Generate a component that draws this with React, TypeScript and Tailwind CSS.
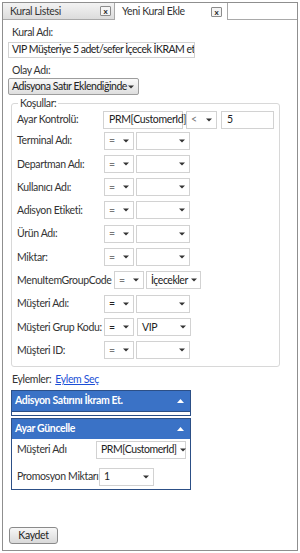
import React from "react";

function Arrow({ color = "#333" }: { color?: string }) {
    return (
        <svg width="6" height="4" viewBox="0 0 6 4" className="shrink-0">
            <path d="M0 0.5 L6 0.5 L3 3.5 Z" fill={color} />
        </svg>
    );
}

function UpArrow() {
    return (
        <svg width="7" height="4" viewBox="0 0 7 4">
            <path d="M0 4 L7 4 L3.5 0 Z" fill="#fff" />
        </svg>
    );
}

interface SelProps {
    w: string;
    value?: string;
    dim?: boolean;
}

function Sel({ w, value = "", dim = false }: SelProps) {
    return (
        <div className={`h-[18px] border border-[#d2d2d2] bg-white flex items-center justify-between gap-[3px] pl-[4px] pr-[4px] shrink-0 ${w}`}>
            <span className={`whitespace-nowrap tracking-[-0.45px] ${dim ? "text-[#777]" : "text-[#222]"}`}>{value}</span>
            <Arrow />
        </div>
    );
}

function Box({ w, value }: { w: string; value: string }) {
    return (
        <div className={`h-[18px] border border-[#d2d2d2] bg-white flex items-center pl-[5px] shrink-0 whitespace-nowrap text-[#222] ${w}`}>
            {value}
        </div>
    );
}

function CloseBtn() {
    return (
        <span className="w-[11px] h-[10px] border border-[#8c8c8c] bg-[#f4f4f4] rounded-[1px] flex items-center justify-center text-[8px] font-bold leading-none tracking-normal text-[#222]">
            x
        </span>
    );
}

const rows: { label: string; value?: string }[] = [
    { label: "Terminal Adı:" },
    { label: "Departman Adı:" },
    { label: "Kullanıcı Adı:" },
    { label: "Adisyon Etiketi:" },
    { label: "Ürün Adı:" },
    { label: "Miktar:" },
];

export default function App() {
    return (
        <div className="w-[300px] h-[553px] bg-white p-[2px] text-[10.5px] tracking-[-0.35px] text-[#333] font-['Lato',sans-serif] leading-none">
            <div className="h-full border border-[#8f8f8f] flex flex-col">
                {/* Tabs */}
                <div className="flex h-[17px] shrink-0">
                    <div className="w-[112px] flex items-center justify-between pl-[7px] pr-[3px] bg-gradient-to-b from-[#f3f3f3] to-[#dcdcdc] border-r border-b border-[#a9a9a9]">
                        <span>Kural Listesi</span>
                        <CloseBtn />
                    </div>
                    <div className="w-[113px] flex items-center justify-between pl-[7px] pr-[5px] bg-white border-r border-[#a9a9a9]">
                        <span>Yeni Kural Ekle</span>
                        <CloseBtn />
                    </div>
                    <div className="flex-1 border-b border-[#a9a9a9]" />
                </div>

                {/* Content */}
                <div className="flex-1 flex flex-col px-[5px]">
                    <div className="pl-[4px] pt-[7px]">Kural Adı:</div>
                    <div className="mt-[4px] w-[187px] h-[16px] border border-[#d2d2d2] flex items-center pl-[3px] text-[#222] whitespace-nowrap overflow-hidden tracking-[-0.5px]">
                        VIP Müşteriye 5 adet/sefer İçecek İKRAM et
                    </div>
                    <div className="pl-[4px] mt-[7px]">Olay Adı:</div>
                    <div className="mt-[3px] w-[131px] h-[17px] border border-[#9d9d9d] rounded-[2px] bg-gradient-to-b from-[#fafafa] to-[#dedede] flex items-center justify-between pl-[3px] pr-[4px] text-[#222]">
                        <span className="whitespace-nowrap tracking-[-0.45px]">Adisyona Satır Eklendiğinde</span>
                        <Arrow />
                    </div>

                    {/* Conditions */}
                    <fieldset className="mt-[3px] ml-[3px] w-[268px] border border-[#d8d8d8] rounded-[3px] px-[5px] pb-[7px]">
                        <legend className="px-[2px] ml-[1px]">Koşullar:</legend>
                        <div className="flex items-center mt-[2px] h-[18px]">
                            <span className="w-[86px] shrink-0">Ayar Kontrolü:</span>
                            <Box w="w-[80px]" value="PRM[CustomerId]" />
                            <div className="ml-[3px]"><Sel w="w-[31px]" value="<" dim /></div>
                            <div className="ml-[4px]"><Box w="w-[53px]" value="5" /></div>
                        </div>
                        <div className="flex flex-col gap-[5.3px] mt-[3px]">
                            {rows.map((r) => (
                                <div key={r.label} className="flex items-center h-[18px]">
                                    <span className="w-[87px] shrink-0">{r.label}</span>
                                    <Sel w="w-[30px]" value="=" dim />
                                    <div className="ml-[2px]"><Sel w="w-[54px]" /></div>
                                </div>
                            ))}
                            <div className="flex items-center h-[18px]">
                                <span className="w-[97px] shrink-0 whitespace-nowrap">MenuItemGroupCode</span>
                                <Sel w="w-[30px]" value="=" dim />
                                <div className="ml-[2px]"><Sel w="w-[55px]" value="İçecekler" /></div>
                            </div>
                            <div className="flex items-center h-[18px]">
                                <span className="w-[87px] shrink-0">Müşteri Adı:</span>
                                <Sel w="w-[30px]" value="=" />
                                <div className="ml-[2px]"><Sel w="w-[54px]" /></div>
                            </div>
                            <div className="flex items-center h-[18px]">
                                <span className="w-[87px] shrink-0 whitespace-nowrap">Müşteri Grup Kodu:</span>
                                <Sel w="w-[30px]" value="=" />
                                <div className="ml-[3px]"><Sel w="w-[54px]" value="VIP" /></div>
                            </div>
                            <div className="flex items-center h-[18px]">
                                <span className="w-[87px] shrink-0">Müşteri ID:</span>
                                <Sel w="w-[30px]" value="=" dim />
                                <div className="ml-[2px]"><Sel w="w-[54px]" /></div>
                            </div>
                        </div>
                    </fieldset>

                    {/* Actions */}
                    <div className="mt-[7px] pl-[4px] flex items-center gap-[4px]">
                        <span>Eylemler:</span>
                        <a href="#" className="text-[#1b4fd6] underline">Eylem Seç</a>
                    </div>

                    <div className="mt-[5px] ml-[3px] w-[180px] border border-[#2c4f86]">
                        <div className="h-[20px] bg-[#3a72c6] flex items-center justify-between pl-[3px] pr-[6px] text-white font-bold">
                            <span>Adisyon Satırını İkram Et.</span>
                            <UpArrow />
                        </div>
                        <div className="h-[4px] bg-white border-t border-[#2c4f86]" />
                    </div>

                    <div className="mt-[2px] ml-[3px] w-[180px] border border-[#2c4f86]">
                        <div className="h-[20px] bg-[#3a72c6] flex items-center justify-between pl-[3px] pr-[6px] text-white font-bold">
                            <span>Ayar Güncelle</span>
                            <UpArrow />
                        </div>
                        <div className="bg-white pl-[5px] pt-[2px] pb-[3px]">
                            <div className="flex items-center h-[18px]">
                                <span className="w-[79px] shrink-0">Müşteri Adı</span>
                                <Sel w="w-[90px]" value="PRM[CustomerId]" />
                            </div>
                            <div className="flex items-center h-[18px] mt-[9px]">
                                <span className="w-[82px] shrink-0 whitespace-nowrap">Promosyon Miktarı</span>
                                <Sel w="w-[55px]" value="1" />
                            </div>
                        </div>
                    </div>

                    <div className="mt-auto mb-[6px] ml-[1px]">
                        <button className="w-[49px] h-[17px] border border-[#8a8a8a] rounded-[3px] bg-gradient-to-b from-[#f7f7f7] to-[#d9d9d9] text-[#222] flex items-center justify-center">
                            Kaydet
                        </button>
                    </div>
                </div>
            </div>
        </div>
    );
}
